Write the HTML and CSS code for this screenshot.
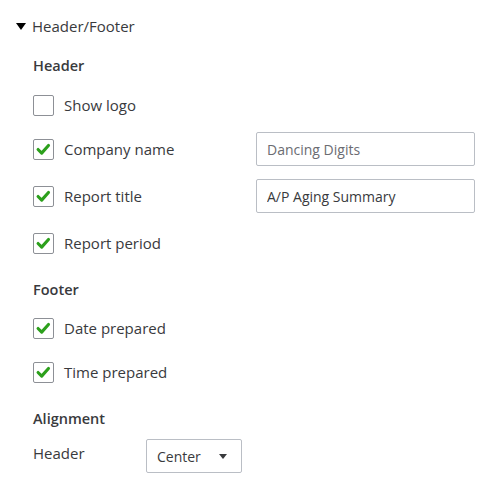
FILE: index.html
```html
<!DOCTYPE html>
<html>
<head>
<meta charset="utf-8">
<link rel="stylesheet" href="styles.css">
</head>
<body>
<div class="panel">
  <div class="toggle">
    <span class="caret"></span>
    <span class="toggle-label">Header/Footer</span>
  </div>
  <div class="content">
    <div class="heading">Header</div>
    <div class="rows">
      <div class="row row-lead">
        <span class="cb"></span>
        <span class="label">Show logo</span>
      </div>
      <div class="row row-tight">
        <span class="cb checked"><svg viewBox="0 0 21 21"><path d="M4.5 10.5 L8.5 14.5 L16 6" /></svg></span>
        <span class="label label-fixed">Company name</span>
        <input class="text-input light" type="text" value="Dancing Digits">
      </div>
      <div class="row">
        <span class="cb checked"><svg viewBox="0 0 21 21"><path d="M4.5 10.5 L8.5 14.5 L16 6" /></svg></span>
        <span class="label label-fixed">Report title</span>
        <input class="text-input" type="text" value="A/P Aging Summary">
      </div>
      <div class="row">
        <span class="cb checked"><svg viewBox="0 0 21 21"><path d="M4.5 10.5 L8.5 14.5 L16 6" /></svg></span>
        <span class="label">Report period</span>
      </div>
    </div>

    <div class="heading heading-gap">Footer</div>
    <div class="rows">
      <div class="row row-first">
        <span class="cb checked"><svg viewBox="0 0 21 21"><path d="M4.5 10.5 L8.5 14.5 L16 6" /></svg></span>
        <span class="label">Date prepared</span>
      </div>
      <div class="row row-tight">
        <span class="cb checked"><svg viewBox="0 0 21 21"><path d="M4.5 10.5 L8.5 14.5 L16 6" /></svg></span>
        <span class="label">Time prepared</span>
      </div>
    </div>

    <div class="heading heading-gap">Alignment</div>
    <div class="rows">
      <div class="row row-align">
        <span class="label align-label">Header</span>
        <div class="select">
          <span>Center</span>
          <span class="select-caret"></span>
        </div>
      </div>
    </div>
  </div>
</div>
</body>
</html>
```
FILE: styles.css
```css
* { box-sizing: border-box; }
html, body {
  margin: 0;
  padding: 0;
  background: #ffffff;
}
body {
  font-family: "Open Sans", "Lato", sans-serif;
  color: #393a3d;
  font-size: 14px;
}
.panel {
  padding: 16px 0 0 16px;
  width: 490px;
}
.toggle {
  display: flex;
  align-items: center;
  height: 20px;
}
.caret {
  width: 0;
  height: 0;
  border-left: 5.5px solid transparent;
  border-right: 5.5px solid transparent;
  border-top: 7px solid #000;
  margin-right: 6px;
}
.toggle-label {
  font-size: 15px;
  color: #393a3d;
}
.content {
  padding-left: 17px;
}
.heading {
  margin-top: 20px;
  height: 20px;
  line-height: 20px;
  font-weight: 600;
  font-size: 14.5px;
  color: #393a3d;
}
.rows {
  display: flex;
  flex-direction: column;
}
.row {
  display: flex;
  align-items: center;
  height: 34px;
  margin-top: 13px;
}
.row-lead { margin-top: 12px; }
.row-first { margin-top: 11px; }
.row-tight { margin-top: 10px; }
.row-align {
  margin-top: 10px;
  align-items: flex-start;
}
.cb {
  width: 21px;
  height: 21px;
  border: 1px solid #8d9096;
  border-radius: 2px;
  margin-right: 10px;
  flex: none;
  display: flex;
  align-items: center;
  justify-content: center;
}
.cb svg {
  width: 19px;
  height: 19px;
}
.cb svg path {
  fill: none;
  stroke: #2ca01c;
  stroke-width: 3.4;
  stroke-linecap: round;
  stroke-linejoin: round;
}
.label {
  font-size: 15px;
  color: #393a3d;
}
.label-fixed {
  width: 192px;
}
.text-input {
  width: 219px;
  height: 34px;
  border: 1px solid #babec5;
  border-radius: 2px;
  padding: 0 10px;
  font-family: "Open Sans", "Lato", sans-serif;
  font-size: 14px;
  color: #393a3d;
  outline: none;
}
.text-input.light { color: #6b6c72; }
.align-label {
  width: 113px;
  line-height: 28px;
}
.select {
  width: 96px;
  height: 34px;
  border: 1px solid #babec5;
  border-radius: 2px;
  display: flex;
  align-items: center;
  justify-content: space-between;
  padding: 0 14px 0 10px;
  font-size: 14px;
  color: #393a3d;
}
.select-caret {
  width: 0;
  height: 0;
  border-left: 4px solid transparent;
  border-right: 4px solid transparent;
  border-top: 5px solid #393a3d;
}
```
